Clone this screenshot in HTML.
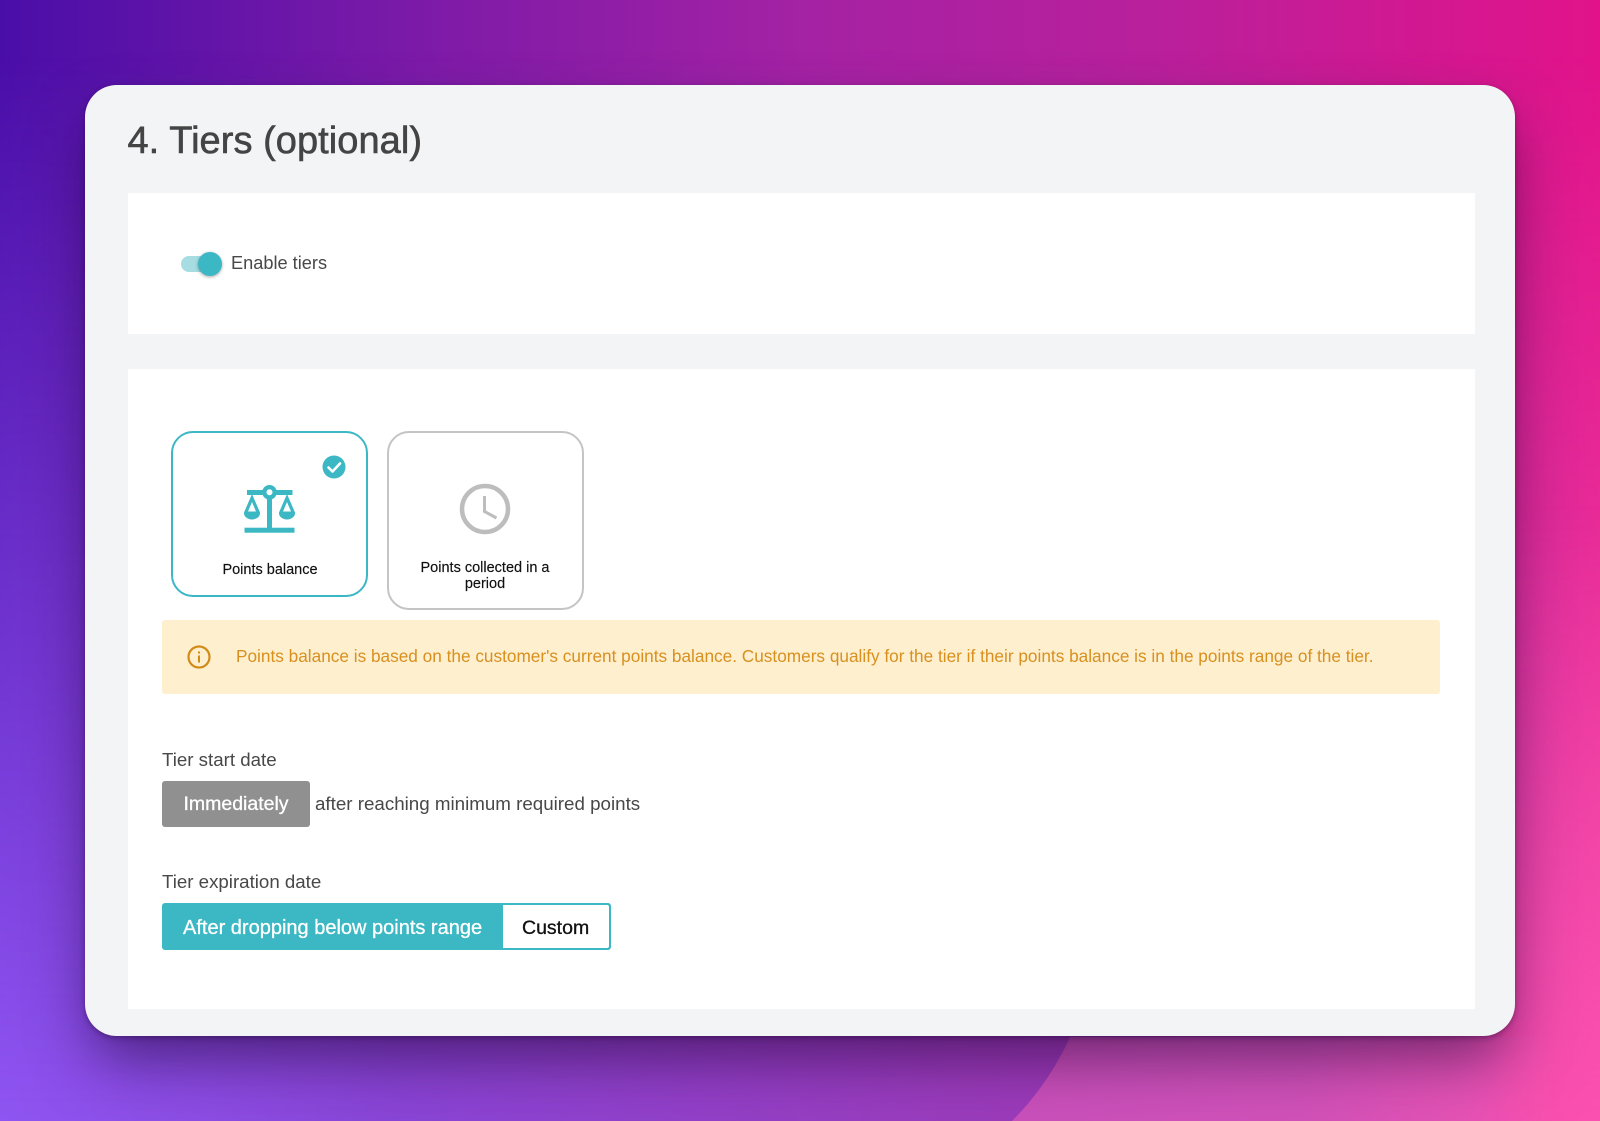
<!DOCTYPE html>
<html lang="en">
<head>
<meta charset="utf-8">
<title>4. Tiers (optional)</title>
<style>
html,body{margin:0;padding:0;width:1600px;height:1121px;overflow:hidden}
body{position:relative;font-family:"Liberation Sans",Arial,sans-serif;background:#7a2bc0}
.abs{position:absolute}
.t{position:absolute;white-space:nowrap}
#bgTop{left:0;top:0;width:1600px;height:1121px;background:linear-gradient(90deg,#4a0ea8 0%,#7a1aa8 25%,#a422a4 50%,#b9209c 72%,#e2138a 100%)}
#bgBot{left:0;top:0;width:1600px;height:1121px;background:linear-gradient(90deg,#8f55f2 0%,#8a45d6 25%,#9a3cbc 60%,#a038b4 80%,#f04aa8 100%);-webkit-mask-image:linear-gradient(180deg,transparent 0%,transparent 5%,#000 100%);mask-image:linear-gradient(180deg,transparent 0%,transparent 5%,#000 100%)}
#arcWrap{left:1000px;top:1030px;width:600px;height:91px;-webkit-mask-image:linear-gradient(90deg,#000 78%,transparent 93%);mask-image:linear-gradient(90deg,#000 78%,transparent 93%)}
#arc{left:0;top:0;width:600px;height:91px;background:linear-gradient(90deg,#c950bb 0%,#d151b9 50%,#e852b4 82%,#fb55b0 100%);clip-path:path("M70 7C55 40 35 68 12 91H600V7Z")}
#bgPink{left:0;top:0;width:1600px;height:1121px;background:linear-gradient(100deg,rgba(250,80,175,0) 70%,rgba(250,80,175,1) 100%);-webkit-mask-image:linear-gradient(180deg,transparent 45%,#000 100%);mask-image:linear-gradient(180deg,transparent 45%,#000 100%)}
#card{left:85px;top:85px;width:1430px;height:951px;border-radius:32px;background:#f3f4f6;box-shadow:0 30px 60px -8px rgba(25,0,45,.55),0 2px 6px rgba(25,0,45,.35)}
.panel{position:absolute;left:127.5px;width:1347.5px;background:#fff}
h1{position:absolute;margin:0;left:127.5px;top:118px;font-size:38px;line-height:46px;font-weight:400;letter-spacing:.05px;color:#444;-webkit-text-stroke:.6px #444;white-space:nowrap}
.track{left:181px;top:256px;width:28px;height:16px;border-radius:8px;background:#a6dde2}
.knob{left:198px;top:252px;width:24px;height:24px;border-radius:50%;background:#3bb8c3;box-shadow:0 1px 3px rgba(0,0,0,.35)}
.lbl{font-size:18.7px;line-height:22px;color:#484848}
.opt{position:absolute;box-sizing:border-box;border-radius:22px;background:#fff}
.optt{position:absolute;text-align:center;font-size:14.5px;line-height:15.5px;color:#111;-webkit-text-stroke:.15px #111}
#alert{left:162px;top:620px;width:1278px;height:74px;background:#feefcf;border-radius:3px}
.atext{left:236px;top:645px;font-size:17.23px;line-height:22px;color:#d8901f}
#imm{left:162px;top:781px;width:148px;height:46px;border-radius:3px;background:#909090;color:#fff;font-size:19.5px;line-height:47px;text-align:center;-webkit-text-stroke:.3px #fff}
#seg{left:162px;top:903px;width:449px;height:47px;box-sizing:border-box;border-radius:3px;border:2px solid #3bb8c3;background:#3bb8c3}
#cust{left:503px;top:905px;width:105.5px;height:43px;background:#fff;border-radius:0 2px 2px 0}
</style>
</head>
<body>
<div class="abs" id="bgTop"></div>
<div class="abs" id="bgBot"></div>
<div class="abs" id="bgPink"></div>
<div class="abs" id="arcWrap"><div class="abs" id="arc"></div></div>
<div class="abs" id="card"></div>
<h1>4. Tiers (optional)</h1>
<div class="panel" style="top:193px;height:141px"></div>
<div class="panel" style="top:369px;height:640px"></div>

<div class="abs track"></div>
<div class="abs knob"></div>
<div class="t lbl" style="left:231px;top:252px;font-size:18.2px">Enable tiers</div>

<div class="opt" style="left:171px;top:431px;width:197px;height:166px;border:2px solid #3bb8c3"></div>
<div class="opt" style="left:387px;top:431px;width:197px;height:179px;border:2px solid #c4c4c4"></div>
<div class="abs" id="alert"></div>
<svg class="abs" style="left:0;top:0" width="1600" height="1121" viewBox="0 0 1600 1121">
  <circle cx="334" cy="467" r="11.5" fill="#3bb8c3"/>
  <path d="M328.5 467.5l4 4 7.5-8" fill="none" stroke="#fff" stroke-width="2.6" stroke-linecap="round" stroke-linejoin="round"/>
  <g fill="#3bb8c3">
    <rect x="247" y="490" width="45.5" height="5"/>
    <rect x="267" y="492" width="5" height="38"/>
    <rect x="244.5" y="527.7" width="50" height="5"/>
    <circle cx="269.5" cy="492.3" r="7.3"/>
    <path fill-rule="evenodd" d="M252 494L260 512.5C260.500 516.500 256.500 519.500 252 519.500C247.500 519.500 243.500 516.500 244 512.500ZM252 502L248 511.500H256Z"/>
    <path fill-rule="evenodd" d="M287 494L295 512.5C295.500 516.500 291.500 519.500 287 519.500C282.500 519.500 278.500 516.500 279 512.500ZM287 502L283 511.500H291Z"/>
  </g>
  <circle cx="269.5" cy="492.3" r="3" fill="#fff"/>
  <circle cx="485" cy="509" r="23" fill="none" stroke="#bdbdbd" stroke-width="4.5"/>
  <path d="M484.500 496V511.500L496.500 518" fill="none" stroke="#bdbdbd" stroke-width="3"/>
  <circle cx="199" cy="657" r="10.500" fill="none" stroke="#d38b18" stroke-width="2.200"/>
  <rect x="198" y="655.500" width="2" height="7" fill="#d38b18"/>
  <rect x="198" y="651.500" width="2" height="2" fill="#d38b18"/>
</svg>
<div class="t optt" style="left:172px;top:561px;width:196px;margin-top:2px">Points balance</div>
<div class="optt" style="left:410px;top:561px;width:150px">Points collected in a period</div>

<div class="t atext">Points balance is based on the customer's current points balance. Customers qualify for the tier if their points balance is in the points range of the tier.</div>

<div class="t lbl" style="left:162px;top:749px">Tier start date</div>
<div class="abs" id="imm">Immediately</div>
<div class="t lbl" style="left:315px;top:793px;font-size:18.75px">after reaching minimum required points</div>

<div class="t lbl" style="left:162px;top:871px">Tier expiration date</div>
<div class="abs" id="seg"></div>
<div class="abs" id="cust"></div>
<div class="t" style="left:183px;top:916px;font-size:20px;line-height:24px;color:#fff;-webkit-text-stroke:.3px #fff">After dropping below points range</div>
<div class="t" style="left:522px;top:916px;font-size:19.5px;line-height:24px;color:#111;-webkit-text-stroke:.3px #111">Custom</div>
</body>
</html>
